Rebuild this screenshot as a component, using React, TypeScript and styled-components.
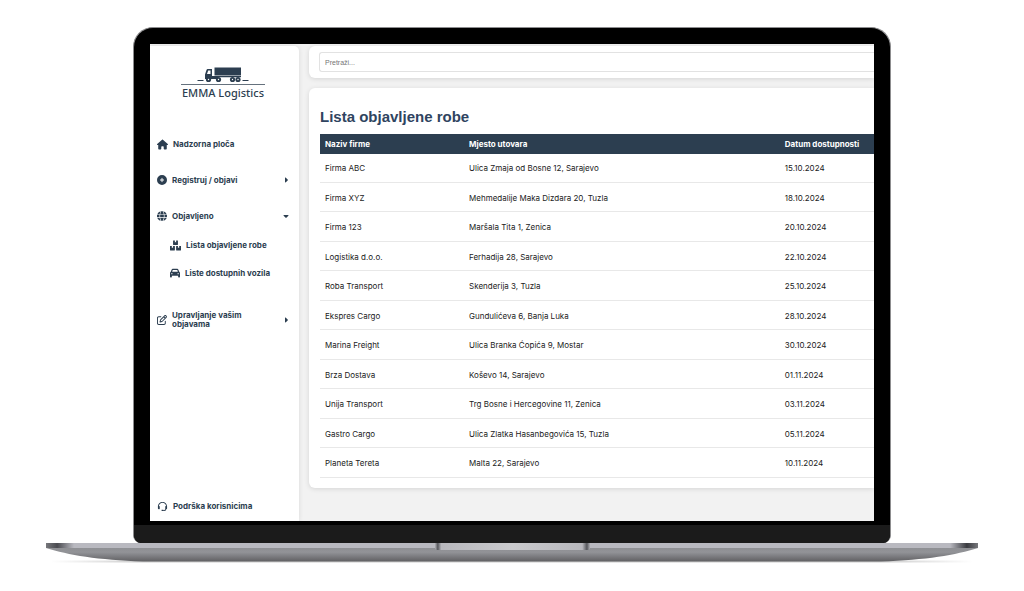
import React from "react";
import styled, { createGlobalStyle } from "styled-components";
import { FaHouse, FaCirclePlus, FaGlobe, FaCar, FaRegPenToSquare, FaCaretRight, FaCaretDown } from "react-icons/fa6";
import { FaBoxes } from "react-icons/fa";
import { BiSupport } from "react-icons/bi";

const navy = "#2c3e50";

const GlobalStyle = createGlobalStyle`
  *, *::before, *::after { box-sizing: border-box; }
  body { margin: 0; background: #fff; font-family: "Liberation Sans", Arial, sans-serif; }
`;

const Page = styled.main`
  padding: 27px 46px;
`;

const Lid = styled.div`
  margin: 0 87px;
  padding: 16px 16px 0;
  background: #000;
  border: 1px solid #8d8d8f;
  border-bottom: 0;
  border-radius: 20px 20px 8px 8px;
  overflow: hidden;
`;

const Chin = styled.div`
  height: 18px;
  margin: 4px -16px 0;
  background: #1b1b1b;
`;

const Screen = styled.div`
  display: flex;
  min-height: 477px;
  background: #f2f2f2;
  overflow: hidden;
`;

const Base = styled.svg`
  display: block;
  width: 100%;
  height: 24px;
`;

const Sidebar = styled.aside`
  display: flex;
  flex-direction: column;
  flex: 0 0 149px;
  margin-top: 2px;
  padding: 20px 7px 6px;
  background: #fff;
  border-radius: 0 5px 0 0;
  box-shadow: 0 0 5px rgba(0, 0, 0, 0.1);
  color: ${navy};
`;

const Brand = styled.a`
  display: flex;
  flex-direction: column;
  align-items: center;
  margin: 0 0 35px -3px;
  color: ${navy};
  text-decoration: none;
  font: 500 11px/14px "Noto Sans", sans-serif;
`;

const Nav = styled.nav`
  display: flex;
  flex-direction: column;
  flex: 1;
`;

const Item = styled.button<{ $gap?: number }>`
  display: flex;
  align-items: center;
  gap: 5px;
  min-height: 18px;
  margin: 0 0 ${(p) => p.$gap ?? 18}px;
  padding: 0 2px 0 0;
  border: 0;
  background: none;
  color: inherit;
  font: 700 8px/9px Inter, "Liberation Sans", sans-serif;
  text-align: left;
  cursor: pointer;
  svg { flex: none; }
`;

const ItemText = styled.span`
  flex: 1;
`;

const SubList = styled.div`
  display: flex;
  flex-direction: column;
  padding-left: 13px;
`;

const Content = styled.div`
  flex: 1;
  min-width: 0;
  display: flex;
  flex-direction: column;
  gap: 10px;
  padding: 2px 0 0 10px;
`;

const Panel = styled.section<{ $pad: string }>`
  padding: ${(p) => p.$pad};
  background: #fff;
  border-radius: 6px 0 0 6px;
  box-shadow: 0 1px 5px rgba(0, 0, 0, 0.12);
`;

const Search = styled.input`
  display: block;
  width: 100%;
  height: 20px;
  padding: 0 5px;
  border: 1px solid #e2e2e2;
  border-right: 0;
  border-radius: 3px 0 0 3px;
  font: 7px "Liberation Sans", sans-serif;
  &::placeholder { color: #757575; }
`;

const Title = styled.h1`
  margin: 0 0 8px;
  color: #2f4460;
  font-size: 15px;
  line-height: 18px;
`;

const Table = styled.table`
  width: 100%;
  height: 344px;
  border-collapse: collapse;
  table-layout: fixed;
  font-family: Inter, "Liberation Sans", sans-serif;
  font-size: 8px;
  color: #222;
`;

const Th = styled.th<{ $w: string }>`
  width: ${(p) => p.$w};
  height: 20px;
  padding: 0 5px 1px;
  background: ${navy};
  color: #fff;
  text-align: left;
`;

const Td = styled.td`
  padding: 1px 5px 0;
  border-bottom: 1px solid #e8e8e8;
`;

const rows = [
  ["Firma ABC", "Ulica Zmaja od Bosne 12, Sarajevo", "15.10.2024"],
  ["Firma XYZ", "Mehmedalije Maka Dizdara 20, Tuzla", "18.10.2024"],
  ["Firma 123", "Maršala Tita 1, Zenica", "20.10.2024"],
  ["Logistika d.o.o.", "Ferhadija 28, Sarajevo", "22.10.2024"],
  ["Roba Transport", "Skenderija 3, Tuzla", "25.10.2024"],
  ["Ekspres Cargo", "Gundulićeva 6, Banja Luka", "28.10.2024"],
  ["Marina Freight", "Ulica Branka Ćopića 9, Mostar", "30.10.2024"],
  ["Brza Dostava", "Koševo 14, Sarajevo", "01.11.2024"],
  ["Unija Transport", "Trg Bosne i Hercegovine 11, Zenica", "03.11.2024"],
  ["Gastro Cargo", "Ulica Zlatka Hasanbegovića 15, Tuzla", "05.11.2024"],
  ["Planeta Tereta", "Malta 22, Sarajevo", "10.11.2024"],
];

const Truck = () => (
  <svg width="84" height="20" viewBox="0 0 84 20" fill={navy} aria-hidden="true">
    <path d="M33.500 1.500h26.500v8h-26.500z" />
    <path d="M24 13V8.500L25.500 4q.3-1 1.300-1H31v7h6v3zM26 8h3.500V4.500h-2.300z" fillRule="evenodd" />
    <path d="M31 10h29v1.200H31z" />
    <circle cx="27.500" cy="13.500" r="2.600" />
    <circle cx="37.500" cy="13.500" r="2.600" />
    <circle cx="51.500" cy="13.500" r="2.600" />
    <circle cx="57" cy="13.500" r="2.600" />
    <g fill="#fff">
      <circle cx="27.500" cy="13.500" r=".7" />
      <circle cx="37.500" cy="13.500" r=".7" />
      <circle cx="51.500" cy="13.500" r=".7" />
      <circle cx="57" cy="13.500" r=".7" />
    </g>
    <path d="M16.500 14h6v1h-6zM61.500 14h6v1h-6z" />
    <path d="M0 18h84v1H0z" fill="#65717d" />
  </svg>
);

const LaptopBase = () => (
  <Base viewBox="0 0 932 24" preserveAspectRatio="none" aria-hidden="true">
    <defs>
      <linearGradient id="body" x1="0" y1="0" x2="0" y2="1">
        <stop offset="0" stopColor="#8b8c90" />
        <stop offset="0.5" stopColor="#929397" />
        <stop offset="1" stopColor="#606063" />
      </linearGradient>
      <linearGradient id="lip">
        <stop offset="0" stopColor="#77787c" />
        <stop offset="0.012" stopColor="#4a4b50" />
        <stop offset="0.03" stopColor="#b9b9c0" />
        <stop offset="0.97" stopColor="#b9b9c0" />
        <stop offset="0.988" stopColor="#3a3b40" />
        <stop offset="1" stopColor="#77787c" />
      </linearGradient>
      <linearGradient id="notch">
        <stop offset="0" stopColor="#b0b0b5" />
        <stop offset="0.018" stopColor="#55565b" />
        <stop offset="0.04" stopColor="#b8b8bd" />
        <stop offset="0.5" stopColor="#cacacd" />
        <stop offset="0.95" stopColor="#b8b8bd" />
        <stop offset="0.98" stopColor="#55565b" />
        <stop offset="1" stopColor="#b0b0b5" />
      </linearGradient>
      <linearGradient id="shade">
        <stop offset="0" stopColor="#ccc" stopOpacity="0" />
        <stop offset="0.1" stopColor="#ccc" />
        <stop offset="0.9" stopColor="#ccc" />
        <stop offset="1" stopColor="#ccc" stopOpacity="0" />
      </linearGradient>
    </defs>
    <path d="M5 17.500h922v2H5z" fill="url(#shade)" />
    <path d="M0 0H932V5C910 12 880 17 835 18.500H97C52 17 22 12 0 5z" fill="url(#body)" />
    <path d="M0 0h932v5H0z" fill="url(#lip)" />
    <path d="M389 0h155v5q0 2-3 2H392q-3 0-3-2z" fill="url(#notch)" />
  </Base>
);

export default function App() {
  return (
    <Page>
      <GlobalStyle />
      <Lid>
        <Screen>
          <Sidebar>
            <Brand href="#">
              <Truck />
              EMMA Logistics
            </Brand>
            <Nav>
              <Item><FaHouse size={11} /><ItemText>Nadzorna ploča</ItemText></Item>
              <Item><FaCirclePlus size={10} /><ItemText>Registruj / objavi</ItemText><FaCaretRight size={8} /></Item>
              <Item $gap={11}><FaGlobe size={10} /><ItemText>Objavljeno</ItemText><FaCaretDown size={8} /></Item>
              <SubList>
                <Item $gap={10}><FaBoxes size={11} /><ItemText>Lista objavljene robe</ItemText></Item>
                <Item $gap={29}><FaCar size={10} /><ItemText>Liste dostupnih vozila</ItemText></Item>
              </SubList>
              <Item><FaRegPenToSquare size={10} /><ItemText>Upravljanje vašim<br />objavama</ItemText><FaCaretRight size={8} /></Item>
            </Nav>
            <Item $gap={0}><BiSupport size={11} /><ItemText>Podrška korisnicima</ItemText></Item>
          </Sidebar>
          <Content>
            <Panel $pad="6px 0 6px 10px">
              <Search type="search" placeholder="Pretraži..." aria-label="Pretraži" />
            </Panel>
            <Panel $pad="20px 0 10px 11px">
              <Title>Lista objavljene robe</Title>
              <Table>
                <thead>
                  <tr>
                    <Th $w="26%">Naziv firme</Th>
                    <Th $w="57%">Mjesto utovara</Th>
                    <Th $w="17%">Datum dostupnosti</Th>
                  </tr>
                </thead>
                <tbody>
                  {rows.map((row) => (
                    <tr key={row[0]}>{row.map((cell) => <Td key={cell}>{cell}</Td>)}</tr>
                  ))}
                </tbody>
              </Table>
            </Panel>
          </Content>
        </Screen>
        <Chin />
      </Lid>
      <LaptopBase />
    </Page>
  );
}
